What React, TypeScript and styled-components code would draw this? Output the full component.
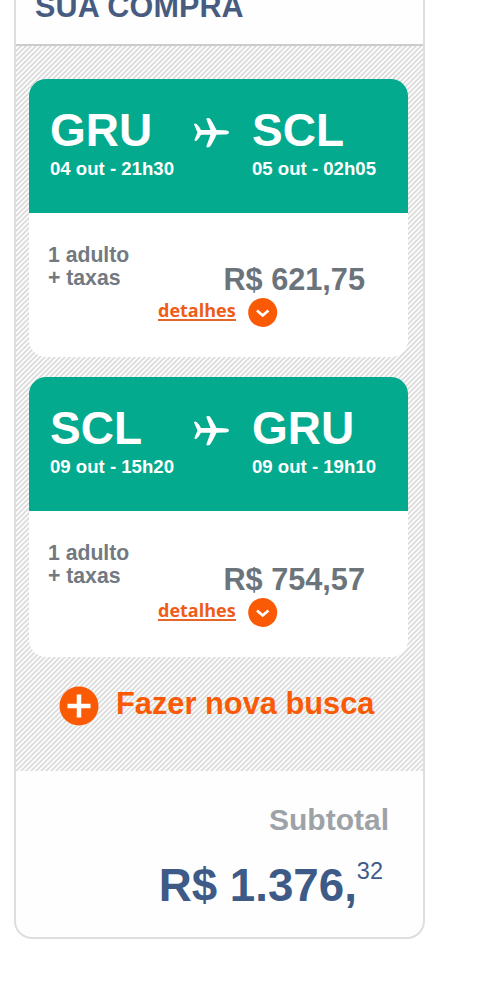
import React from "react";
import styled, { createGlobalStyle } from "styled-components";

const GlobalStyle = createGlobalStyle`
  * { box-sizing: border-box; }
  body {
    margin: 0;
    background: #fff;
    font-family: "Liberation Sans", Arial, sans-serif;
    font-weight: 700;
    white-space: nowrap;
  }
`;

const Page = styled.main`
  height: 987px;
  overflow: hidden;
  padding-left: 14px;
`;

const Panel = styled.section`
  width: 411px;
  height: 939px;
  display: flex;
  flex-direction: column;
  overflow: hidden;
  border: 2px solid #dedede;
  border-top: 0;
  border-radius: 0 0 18px 18px;
  background: #fefefe;
`;

const Header = styled.header`
  height: 46px;
  flex: none;
  border-bottom: 2px solid #ccc;
`;

const Title = styled.h1`
  margin: -11px 0 0 19px;
  font-size: 30.5px;
  line-height: 35px;
  letter-spacing: 0.15px;
  color: #485c82;
`;

const Trips = styled.div`
  height: 725px;
  flex: none;
  display: flex;
  flex-direction: column;
  padding: 33px 15px 0 13px;
  background: repeating-linear-gradient(135deg, #d4d4d4 0, #fafafa 1.3px 2.3px, #d4d4d4 3.536px);
`;

const Card = styled.article<{ $height: number }>`
  height: ${(p) => p.$height}px;
  flex: none;
  margin-bottom: 20px;
  border-radius: 17px;
  overflow: hidden;
  background: #fff;
`;

const Route = styled.div`
  height: 134px;
  display: grid;
  grid-template-columns: 143px 59px 1fr;
  padding: 28px 0 0 20px;
  background: #04aa8d;
  color: #fff;
`;

const Airport = styled.div`
  padding-left: 1px;
  font-size: 46px;
  line-height: 47px;
`;

const Time = styled.div`
  padding-left: 1px;
  font-size: 18.6px;
  line-height: 30px;
`;

const PlaneIcon = styled.svg`
  width: 38px;
  height: 33px;
  margin: 9px 0 0 1px;
`;

const Fare = styled.div`
  padding: 30px 43px 0 19px;
`;

const Passengers = styled.div`
  font-size: 21.2px;
  line-height: 23px;
  color: #727980;
`;

const Price = styled.div<{ $lift: number }>`
  margin-top: -${(p) => p.$lift}px;
  text-align: right;
  font-size: 30.7px;
  line-height: 36px;
  color: #6b737b;
`;

const Details = styled.div`
  display: flex;
  align-items: center;
  height: 30px;
  margin: 0 0 0 110px;
`;

const DetailsLink = styled.a`
  width: 78px;
  margin: -5px 12px 0 0;
  border-bottom: 2px solid #e3672c;
  font: 700 18px/18px "Open Sans", sans-serif;
  color: #ee5c18;
`;

const Chevron = styled.svg`
  width: 30px;
  height: 30px;
`;

const NewSearch = styled.div`
  display: flex;
  align-items: center;
  height: 40px;
  margin: 9px 0 0 30px;
  font-size: 30.8px;
  line-height: 36px;
  color: #fb5a05;
`;

const PlusIcon = styled.svg`
  width: 40px;
  height: 40px;
  margin-right: 17px;
`;

const SearchLabel = styled.span`
  margin-top: -5px;
`;

const Summary = styled.footer`
  padding: 31px 34px 0 0;
  text-align: right;
`;

const Subtotal = styled.div`
  font-size: 30px;
  line-height: 36px;
  color: #9da2a7;
`;

const Total = styled.div`
  display: flex;
  justify-content: flex-end;
  margin: 20px 6px 0 0;
  font-size: 45.7px;
  line-height: 56px;
  color: #3e5b88;
`;

const Cents = styled.span`
  font-size: 23.5px;
  font-weight: 400;
  line-height: 27px;
`;

type Stop = { code: string; time: string };
type Trip = { from: Stop; to: Stop; price: string; height: number; lift: number };

const trips: Trip[] = [
  { from: { code: "GRU", time: "04 out - 21h30" }, to: { code: "SCL", time: "05 out - 02h05" }, price: "R$ 621,75", height: 278, lift: 27 },
  { from: { code: "SCL", time: "09 out - 15h20" }, to: { code: "GRU", time: "09 out - 19h10" }, price: "R$ 754,57", height: 280, lift: 25 },
];

const StopInfo = ({ code, time }: Stop) => (
  <div>
    <Airport>{code}</Airport>
    <Time>{time}</Time>
  </div>
);

const TripCard = ({ from, to, price, height, lift }: Trip) => (
  <Card $height={height}>
    <Route>
      <StopInfo {...from} />
      <PlaneIcon viewBox="0 0 38 33" fill="#fff">
        <path d="M1 8.5 Q1.5 7 3.5 8 Q6.5 10.5 8 14 H17.5 L13.3 3 Q13.8 1.3 16.5 2.2 Q18 3.2 23.5 14 L31 14.2 Q36 14.4 36 16.2 Q36 18.4 31 18.6 L23.5 18.8 Q18.5 29.5 16.5 31 Q14 32.2 13.3 30.5 L17.5 18.8 H8 Q6 22.8 3.5 24.8 Q1.8 25.4 1.4 24 L4.5 16.4Z" />
      </PlaneIcon>
      <StopInfo {...to} />
    </Route>
    <Fare>
      <Passengers>1 adulto<br />+ taxas</Passengers>
      <Price $lift={lift}>{price}</Price>
      <Details>
        <DetailsLink>detalhes</DetailsLink>
        <Chevron viewBox="0 0 30 30">
          <circle cx="14.7" cy="14.5" r="14.5" fill="#fa5a05" />
          <path d="M9 12.5 L14.7 17.5 L20.4 12.5" fill="none" stroke="#fff" strokeWidth="2.8" />
        </Chevron>
      </Details>
    </Fare>
  </Card>
);

export default function App() {
  return (
    <Page>
      <GlobalStyle />
      <Panel>
        <Header>
          <Title>SUA COMPRA</Title>
        </Header>
        <Trips>
          {trips.map((trip) => <TripCard key={trip.price} {...trip} />)}
          <NewSearch>
            <PlusIcon viewBox="0 0 40 40">
              <circle cx="20" cy="20" r="19.5" fill="#fb5a05" />
              <path d="M20 8.5V31.5M8.5 20H31.5" stroke="#fff" strokeWidth="4.5" />
            </PlusIcon>
            <SearchLabel>Fazer nova busca</SearchLabel>
          </NewSearch>
        </Trips>
        <Summary>
          <Subtotal>Subtotal</Subtotal>
          <Total>R$ 1.376,<Cents>32</Cents></Total>
        </Summary>
      </Panel>
    </Page>
  );
}
